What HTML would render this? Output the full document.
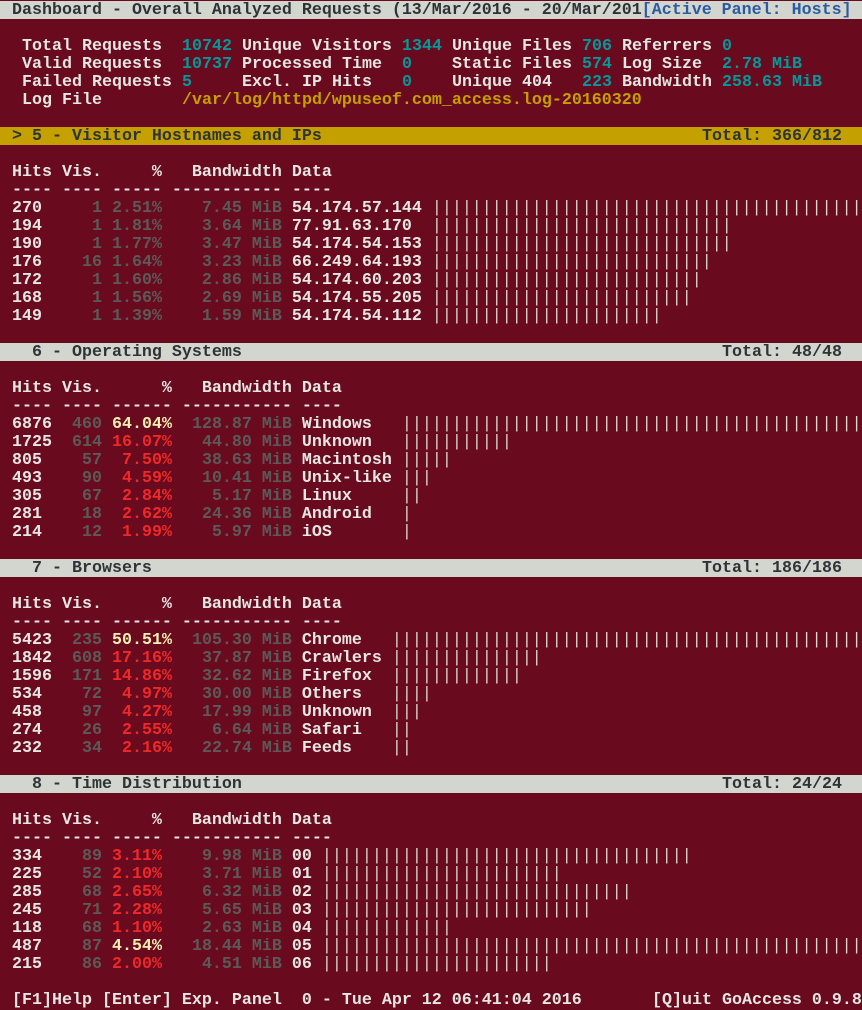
<!DOCTYPE html>
<html><head><meta charset="utf-8">
<style>
html,body{margin:0;padding:0;background:#6a0a1e;}
body{width:862px;height:1010px;overflow:hidden;position:relative;font-family:"Liberation Mono",monospace;font-weight:bold;font-size:16.667px;color:#e6e6e2;}
.scr{position:absolute;left:0;top:1px;width:862px;}
.r{height:18px;line-height:19px;white-space:pre;position:relative;padding-left:2px;}
.bar{background:#d3d5cf;color:#2e3436;}
.sel{background:#c4a000;color:#2e3436;}
.a{position:absolute;top:0;}
.w{color:#e6e6e2}.d{color:#5c5a58}.rd{color:#ef2929}.y{color:#f6efb4}.t{color:#06989a}.o{color:#c4a000}.b{color:#2a5ca0}
.p{font-weight:normal;color:#d8d8cc}
</style></head><body><div class="scr">
<div class="r bar"> Dashboard - Overall Analyzed Requests (13/Mar/2016 - 20/Mar/201<span class="b">[Active Panel: Hosts]</span></div>
<div class="r"></div>
<div class="r"><span class="a w" style="left:22px">Total Requests</span><span class="a t" style="left:182px">10742</span><span class="a w" style="left:242px">Unique Visitors</span><span class="a t" style="left:402px">1344</span><span class="a w" style="left:452px">Unique Files</span><span class="a t" style="left:582px">706</span><span class="a w" style="left:622px">Referrers</span><span class="a t" style="left:722px">0</span></div>
<div class="r"><span class="a w" style="left:22px">Valid Requests</span><span class="a t" style="left:182px">10737</span><span class="a w" style="left:242px">Processed Time</span><span class="a t" style="left:402px">0</span><span class="a w" style="left:452px">Static Files</span><span class="a t" style="left:582px">574</span><span class="a w" style="left:622px">Log Size</span><span class="a t" style="left:722px">2.78 MiB</span></div>
<div class="r"><span class="a w" style="left:22px">Failed Requests</span><span class="a t" style="left:182px">5</span><span class="a w" style="left:242px">Excl. IP Hits</span><span class="a t" style="left:402px">0</span><span class="a w" style="left:452px">Unique 404</span><span class="a t" style="left:582px">223</span><span class="a w" style="left:622px">Bandwidth</span><span class="a t" style="left:722px">258.63 MiB</span></div>
<div class="r"><span class="a w" style="left:22px">Log File</span><span class="a o" style="left:182px">/var/log/httpd/wpuseof.com_access.log-20160320</span></div>
<div class="r"></div>
<div class="r sel"> &gt; 5 - Visitor Hostnames and IPs<span class="a" style="left:702px">Total: 366/812</span></div>
<div class="r"></div>
<div class="r"> Hits Vis.     %   Bandwidth Data</div>
<div class="r"> ---- ---- ----- ----------- ----</div>
<div class="r"> 270 <span class="d">    1 2.51%    7.45 MiB</span> 54.174.57.144 <span class="p">|||||||||||||||||||||||||||||||||||||||||||</span></div>
<div class="r"> 194 <span class="d">    1 1.81%    3.64 MiB</span> 77.91.63.170  <span class="p">||||||||||||||||||||||||||||||</span></div>
<div class="r"> 190 <span class="d">    1 1.77%    3.47 MiB</span> 54.174.54.153 <span class="p">||||||||||||||||||||||||||||||</span></div>
<div class="r"> 176 <span class="d">   16 1.64%    3.23 MiB</span> 66.249.64.193 <span class="p">||||||||||||||||||||||||||||</span></div>
<div class="r"> 172 <span class="d">    1 1.60%    2.86 MiB</span> 54.174.60.203 <span class="p">|||||||||||||||||||||||||||</span></div>
<div class="r"> 168 <span class="d">    1 1.56%    2.69 MiB</span> 54.174.55.205 <span class="p">||||||||||||||||||||||||||</span></div>
<div class="r"> 149 <span class="d">    1 1.39%    1.59 MiB</span> 54.174.54.112 <span class="p">|||||||||||||||||||||||</span></div>
<div class="r"></div>
<div class="r bar">   6 - Operating Systems<span class="a" style="left:722px">Total: 48/48</span></div>
<div class="r"></div>
<div class="r"> Hits Vis.      %   Bandwidth Data</div>
<div class="r"> ---- ---- ------ ----------- ----</div>
<div class="r"> 6876 <span class="d"> 460</span> <span class="y">64.04%</span> <span class="d"> 128.87 MiB</span> Windows   <span class="p">||||||||||||||||||||||||||||||||||||||||||||||</span></div>
<div class="r"> 1725 <span class="d"> 614</span> <span class="rd">16.07%</span> <span class="d">  44.80 MiB</span> Unknown   <span class="p">|||||||||||</span></div>
<div class="r"> 805  <span class="d">  57</span> <span class="rd"> 7.50%</span> <span class="d">  38.63 MiB</span> Macintosh <span class="p">|||||</span></div>
<div class="r"> 493  <span class="d">  90</span> <span class="rd"> 4.59%</span> <span class="d">  10.41 MiB</span> Unix-like <span class="p">|||</span></div>
<div class="r"> 305  <span class="d">  67</span> <span class="rd"> 2.84%</span> <span class="d">   5.17 MiB</span> Linux     <span class="p">||</span></div>
<div class="r"> 281  <span class="d">  18</span> <span class="rd"> 2.62%</span> <span class="d">  24.36 MiB</span> Android   <span class="p">|</span></div>
<div class="r"> 214  <span class="d">  12</span> <span class="rd"> 1.99%</span> <span class="d">   5.97 MiB</span> iOS       <span class="p">|</span></div>
<div class="r"></div>
<div class="r bar">   7 - Browsers<span class="a" style="left:702px">Total: 186/186</span></div>
<div class="r"></div>
<div class="r"> Hits Vis.      %   Bandwidth Data</div>
<div class="r"> ---- ---- ------ ----------- ----</div>
<div class="r"> 5423 <span class="d"> 235</span> <span class="y">50.51%</span> <span class="d"> 105.30 MiB</span> Chrome   <span class="p">|||||||||||||||||||||||||||||||||||||||||||||||</span></div>
<div class="r"> 1842 <span class="d"> 608</span> <span class="rd">17.16%</span> <span class="d">  37.87 MiB</span> Crawlers <span class="p">|||||||||||||||</span></div>
<div class="r"> 1596 <span class="d"> 171</span> <span class="rd">14.86%</span> <span class="d">  32.62 MiB</span> Firefox  <span class="p">|||||||||||||</span></div>
<div class="r"> 534  <span class="d">  72</span> <span class="rd"> 4.97%</span> <span class="d">  30.00 MiB</span> Others   <span class="p">||||</span></div>
<div class="r"> 458  <span class="d">  97</span> <span class="rd"> 4.27%</span> <span class="d">  17.99 MiB</span> Unknown  <span class="p">|||</span></div>
<div class="r"> 274  <span class="d">  26</span> <span class="rd"> 2.55%</span> <span class="d">   6.64 MiB</span> Safari   <span class="p">||</span></div>
<div class="r"> 232  <span class="d">  34</span> <span class="rd"> 2.16%</span> <span class="d">  22.74 MiB</span> Feeds    <span class="p">||</span></div>
<div class="r"></div>
<div class="r bar">   8 - Time Distribution<span class="a" style="left:722px">Total: 24/24</span></div>
<div class="r"></div>
<div class="r"> Hits Vis.     %   Bandwidth Data</div>
<div class="r"> ---- ---- ----- ----------- ----</div>
<div class="r"> 334  <span class="d">  89</span> <span class="rd">3.11%</span> <span class="d">   9.98 MiB</span> 00 <span class="p">|||||||||||||||||||||||||||||||||||||</span></div>
<div class="r"> 225  <span class="d">  52</span> <span class="rd">2.10%</span> <span class="d">   3.71 MiB</span> 01 <span class="p">||||||||||||||||||||||||</span></div>
<div class="r"> 285  <span class="d">  68</span> <span class="rd">2.65%</span> <span class="d">   6.32 MiB</span> 02 <span class="p">|||||||||||||||||||||||||||||||</span></div>
<div class="r"> 245  <span class="d">  71</span> <span class="rd">2.28%</span> <span class="d">   5.65 MiB</span> 03 <span class="p">|||||||||||||||||||||||||||</span></div>
<div class="r"> 118  <span class="d">  68</span> <span class="rd">1.10%</span> <span class="d">   2.63 MiB</span> 04 <span class="p">|||||||||||||</span></div>
<div class="r"> 487  <span class="d">  87</span> <span class="y">4.54%</span> <span class="d">  18.44 MiB</span> 05 <span class="p">||||||||||||||||||||||||||||||||||||||||||||||||||||||</span></div>
<div class="r"> 215  <span class="d">  86</span> <span class="rd">2.00%</span> <span class="d">   4.51 MiB</span> 06 <span class="p">|||||||||||||||||||||||</span></div>
<div class="r"></div>
<div class="r"> [F1]Help [Enter] Exp. Panel  0 - Tue Apr 12 06:41:04 2016<span class="a" style="left:652px">[Q]uit GoAccess 0.9.8</span></div>
</div></body></html>
